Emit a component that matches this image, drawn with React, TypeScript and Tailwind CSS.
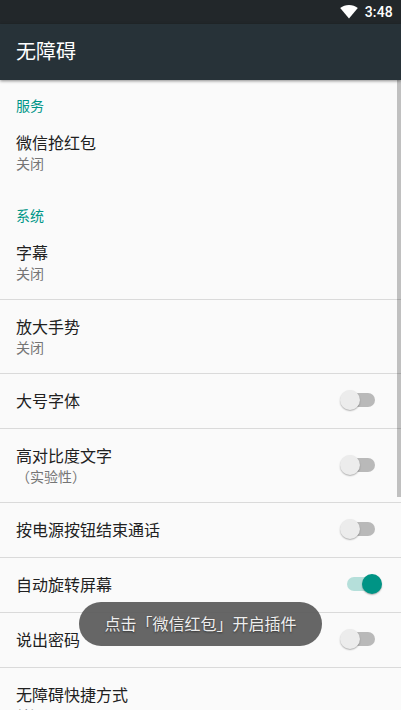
import { useState } from "react";
import clsx from "clsx";

type Item = {
  id: string;
  title: string;
  summary?: string;
  toggle?: boolean;
};

const services: Item[] = [{ id: "plugin", title: "微信抢红包", summary: "关闭" }];

const system: Item[] = [
  { id: "captions", title: "字幕", summary: "关闭" },
  { id: "magnify", title: "放大手势", summary: "关闭" },
  { id: "large-text", title: "大号字体", toggle: true },
  { id: "contrast", title: "高对比度文字", summary: "（实验性）", toggle: true },
  { id: "power", title: "按电源按钮结束通话", toggle: true },
  { id: "rotate", title: "自动旋转屏幕", toggle: true },
  { id: "password", title: "说出密码", toggle: true },
  { id: "shortcut", title: "无障碍快捷方式", summary: "关闭" },
];

type SwitchProps = { on: boolean; label: string; className: string; onClick: () => void };

function Switch({ on, label, className, onClick }: SwitchProps) {
  return (
    <button
      type="button"
      role="switch"
      aria-checked={on}
      aria-label={label}
      onClick={onClick}
      className={clsx("relative flex h-5 w-[42px] shrink-0 items-center justify-center", className)}
    >
      <span className={clsx("h-3.5 w-7 rounded-full", on ? "bg-[#b5dfda]" : "bg-[#b9b9b9]")} />
      <span
        className={clsx(
          "absolute top-0 size-5 rounded-full shadow-[0_1px_1.5px_rgba(0,0,0,0.3)]",
          on ? "right-0 bg-[#009485]" : "left-0 bg-[#ececec]"
        )}
      />
    </button>
  );
}

function SectionTitle({ children }: { children: string }) {
  return <h2 className="h-9 px-4 pt-4 text-sm leading-5 text-[#009688]">{children}</h2>;
}

function Row({ item, on, onToggle }: { item: Item; on: boolean; onToggle: () => void }) {
  return (
    <li
      className={clsx(
        "flex items-center justify-between border-b pl-4 pr-[19px]",
        item.summary ? "h-[74px]" : "h-[55px]",
        item.id === "plugin" ? "border-transparent" : "border-[#dadada]"
      )}
    >
      <div className={clsx(item.summary && "pt-0.5")}>
        <p className="text-base leading-[21px] text-[#212121]">{item.title}</p>
        {item.summary && <p className="text-sm leading-[21px] text-[#757575]">{item.summary}</p>}
      </div>
      {item.toggle && (
        <Switch on={on} label={item.title} className={item.summary ? "mb-px" : "mb-0.5"} onClick={onToggle} />
      )}
    </li>
  );
}

export default function App() {
  const [enabled, setEnabled] = useState<Record<string, boolean>>({ rotate: true });

  const renderRow = (item: Item) => (
    <Row
      key={item.id}
      item={item}
      on={!!enabled[item.id]}
      onToggle={() => setEnabled({ ...enabled, [item.id]: !enabled[item.id] })}
    />
  );

  return (
    <div className="relative flex h-[710px] w-[401px] flex-col overflow-hidden bg-[#fafafa] font-['Roboto','Noto_Sans_CJK_SC',sans-serif]">
      {/* Status bar */}
      <div className="flex h-6 shrink-0 items-center justify-end gap-[7px] bg-[#22272a] pr-2 text-white">
        <svg viewBox="0 0 18 14" className="h-3.5 w-[18px]" fill="currentColor">
          <path d="M9 13.6 0.2 3C2.7 1 5.7 0 9 0s6.3 1 8.8 3z" />
        </svg>
        <span className="text-sm font-medium leading-6 tracking-[0.2px]">3:48</span>
      </div>

      {/* App bar */}
      <header className="z-10 flex h-14 shrink-0 items-center bg-[#273238] px-4 shadow-[0_1px_3px_rgba(0,0,0,0.45)]">
        <h1 className="text-xl leading-7 text-white">无障碍</h1>
      </header>

      <main className="relative min-h-0 flex-1 overflow-hidden">
        <SectionTitle>服务</SectionTitle>
        <ul>{services.map(renderRow)}</ul>
        <SectionTitle>系统</SectionTitle>
        <ul>{system.map(renderRow)}</ul>

        {/* Scroll indicator */}
        <div className="absolute right-0 top-0 h-[417px] w-1 bg-black/[0.23]" />
      </main>

      {/* Toast */}
      <div className="absolute left-[79px] top-[602px] flex h-11 w-[243px] items-center justify-center rounded-full bg-[#5e5e5e]/95 pt-0.5">
        <span className="text-base leading-6 text-[#eeeeee] [text-shadow:0_1px_2px_rgba(0,0,0,0.5)]">点击「微信红包」开启插件</span>
      </div>
    </div>
  );
}
